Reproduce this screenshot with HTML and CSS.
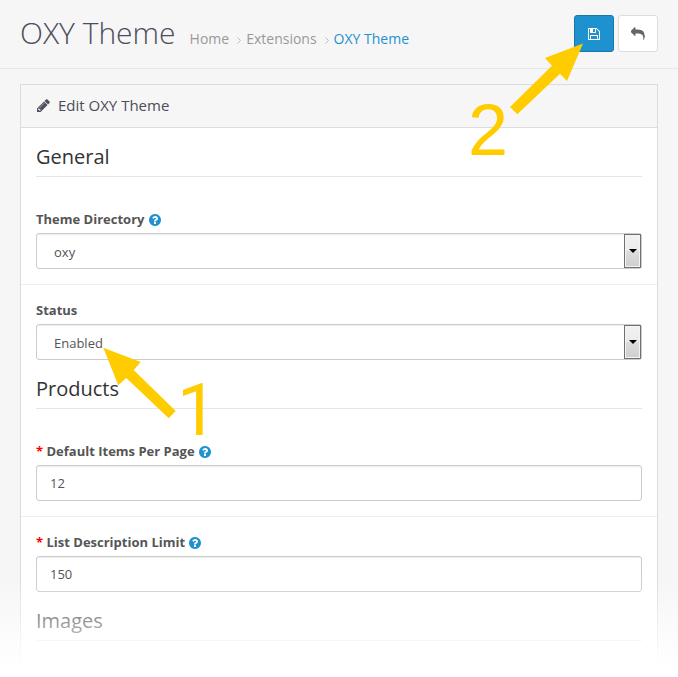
FILE: index.html
```html
<!DOCTYPE html>
<html lang="en">
<head>
<meta charset="utf-8">
<title>OXY Theme</title>
<meta name="viewport" content="width=device-width, initial-scale=1">
<link rel="stylesheet" href="styles.css">
</head>
<body>
<svg class="sprite" aria-hidden="true">
  <symbol id="i-help" viewBox="128 128 1536 1536"><path d="M1024 1376v-192q0-14-9-23t-23-9h-192q-14 0-23 9t-9 23v192q0 14 9 23t23 9h192q14 0 23-9t9-23zm256-672q0-88-55.500-163t-138.500-116-170-41q-243 0-371 213-15 24 8 42l132 100q7 6 19 6 16 0 25-12 53-68 86-92 34-24 86-24 48 0 85.500 26t37.500 59q0 38-20 61t-68 45q-63 28-115.500 86.500t-52.500 125.500v36q0 14 9 23t23 9h192q14 0 23-9t9-23q0-19 21.500-49.500t54.500-49.500q32-18 49-28.500t46-35 44.500-48 28-60.500 12.500-81zm384 192q0 209-103 385.500t-279.500 279.500-385.500 103-385.500-103-279.500-279.500-103-385.500 103-385.500 279.500-279.500 385.500-103 385.500 103 279.500 279.500 103 385.500z"/></symbol>
</svg>
<div class="page">
  <header class="page-header">
    <div class="heading">
      <h1>OXY Theme</h1>
      <nav aria-label="Breadcrumb">
        <ul class="breadcrumb">
          <li><a href="#">Home</a><svg class="sep" viewBox="0 0 4 7" aria-hidden="true"><path d="M.5.5l3 3-3 3"/></svg></li>
          <li><a href="#">Extensions</a><svg class="sep" viewBox="0 0 4 7" aria-hidden="true"><path d="M.5.5l3 3-3 3"/></svg></li>
          <li><a class="current" href="#">OXY Theme</a></li>
        </ul>
      </nav>
    </div>
    <div class="actions">
      <button class="btn btn-primary" type="submit" form="theme-form" aria-label="Save">
        <svg class="icon" viewBox="0 0 1792 1792"><path d="M512 1536h768v-384h-768v384zm896 0h128v-896q0-14-10-38.500t-20-34.500l-281-281q-10-10-34-20t-39-10v416q0 40-28 68t-68 28h-576q-40 0-68-28t-28-68v-416h-128v1280h128v-416q0-40 28-68t68-28h832q40 0 68 28t28 68v416zm-384-928v-320q0-13-9.500-22.500t-22.500-9.500h-192q-13 0-22.500 9.500t-9.500 22.500v320q0 13 9.500 22.500t22.500 9.500h192q13 0 22.500-9.500t9.500-22.500zm640 32v928q0 40-28 68t-68 28h-1344q-40 0-68-28t-28-68v-1344q0-40 28-68t68-28h928q40 0 88 20t76 48l280 280q28 28 48 76t20 88z"/></svg>
      </button>
      <a class="btn btn-default" href="#" aria-label="Back">
        <svg class="icon" viewBox="0 0 1792 1792"><path d="M1792 1120q0 166-127 451-3 7-10.500 24t-13.500 30-13 22q-12 17-28 17-15 0-23.500-10t-8.500-25q0-9 2.500-26.500t2.500-23.500q5-68 5-123 0-112-19.500-200.500t-54-153.500-89-112-117.500-76.500-146.500-48-169-24.500-191-7h-224v256q0 26-19 45t-45 19-45-19l-512-512q-19-19-19-45t19-45l512-512q19-19 45-19t45 19 19 45v256h224q713 0 875 403 53 134 53 333z"/></svg>
      </a>
      <svg class="callout callout-save" viewBox="460 40 130 140">
        <polygon points="583,43.500 545,58 552,65.700 510,107 517.300,114.300 560,73.700 567,81"/>
        <text x="468" y="155">2</text>
      </svg>
    </div>
  </header>

  <main class="panel">
    <h2 class="panel-title">
      <svg class="icon" viewBox="0 0 1792 1792" aria-hidden="true"><path d="M491 1536l91-91-235-235-91 91v107h128v128h107zm523-928q0-22-22-22-10 0-17 7l-542 542q-7 7-7 17 0 22 22 22 10 0 17-7l542-542q7-7 7-17zm-54-192l416 416-832 832h-416v-416zm683 96q0 53-37 90l-166 166-416-416 166-165q36-38 90-38 53 0 91 38l235 234q37 39 37 91z"/></svg>
      Edit OXY Theme
    </h2>
    <form id="theme-form" class="panel-body">
      <section>
        <h3>General</h3>
        <div class="group">
          <label for="directory">Theme Directory <svg class="help"><use href="#i-help"/></svg></label>
          <div class="select"><select id="directory"><option>oxy</option></select></div>
        </div>
        <div class="group">
          <label for="status">Status</label>
          <div class="select"><select id="status"><option>Enabled</option><option>Disabled</option></select></div>
          <svg class="callout callout-status" viewBox="100 340 120 120">
            <polygon points="103.300,347.700 140.700,362 133.700,370 175.700,411 168.700,418.300 126.300,378 118.300,385.300"/>
            <text class="roman" x="177" y="435">1</text>
          </svg>
        </div>
      </section>
      <section>
        <h3>Products</h3>
        <div class="group">
          <label for="limit"><span class="required">*</span> Default Items Per Page <svg class="help"><use href="#i-help"/></svg></label>
          <input id="limit" type="text" value="12">
        </div>
        <div class="group">
          <label for="description"><span class="required">*</span> List Description Limit <svg class="help"><use href="#i-help"/></svg></label>
          <input id="description" type="text" value="150">
        </div>
      </section>
      <section>
        <h3>Images</h3>
      </section>
    </form>
  </main>
  <div class="fade"></div>
</div>
</body>
</html>
```
FILE: styles.css
```css
* {
  box-sizing: border-box;
}

body {
  margin: 0;
  background: #f6f6f6;
  color: #555;
  font: 13px/20px "Open Sans", "Noto Sans", sans-serif;
}

h1, h2, h3, ul {
  margin: 0;
  padding: 0;
  font-weight: 400;
}

a {
  color: #999;
  text-decoration: none;
}

.sprite {
  display: none;
}

.page {
  position: relative;
  display: flex;
  flex-direction: column;
  min-height: 100vh;
}

.page-header {
  display: flex;
  justify-content: space-between;
  align-items: flex-start;
  padding: 15px 20px 16px;
  border-bottom: 1px solid #e7e7e7;
}

.heading {
  display: flex;
  align-items: baseline;
  gap: 14px;
}

h1 {
  color: #4c4d5a;
  font-size: 30px;
  font-weight: 300;
  line-height: 35px;
}

.breadcrumb {
  display: flex;
  list-style: none;
  font-size: 14px;
}

.breadcrumb .current {
  color: #1e91cf;
}

.sep {
  width: 4px;
  height: 7px;
  margin: 0 5px 0 8px;
  fill: none;
  stroke: #bbb;
}

.actions {
  position: relative;
  display: flex;
  gap: 4px;
}

.btn {
  display: flex;
  align-items: center;
  justify-content: center;
  padding: 0 12px;
  height: 37px;
  border: 1px solid #ddd;
  border-radius: 3px;
  background: #fff;
  color: #666;
  cursor: pointer;
}

.btn-primary {
  border-color: #1978ab;
  background: #1e91cf;
  color: #fff;
}

.icon {
  width: 14px;
  height: 14px;
  fill: currentColor;
}

.panel {
  flex: 1;
  margin: 15px 20px 0;
  border: 1px solid #dcdcdc;
  border-bottom: 0;
  background: #fff;
}

.panel-title {
  display: flex;
  align-items: center;
  gap: 7px;
  padding: 10px 15px 12px;
  border-bottom: 1px solid #dcdcdc;
  background: #f6f6f6;
  color: #4c4d5a;
  font-size: 15px;
  line-height: 20px;
}

.panel-title .icon {
  width: 15px;
  height: 15px;
}

.panel-body {
  padding: 15px;
}

h3 {
  padding-bottom: 5px;
  border-bottom: 1px solid #e5e5e5;
  color: #333;
  font-size: 20px;
  line-height: 28px;
}

.group {
  position: relative;
  margin: 0 -15px;
  padding: 15px;
}

h3 + .group {
  margin-top: 17px;
}

.group + .group {
  border-top: 1px solid #ededed;
}

label {
  display: block;
  margin-bottom: 4px;
  font-weight: 700;
}

.required {
  color: #f00;
}

.help {
  width: 12px;
  height: 12px;
  margin-left: 1px;
  fill: #1e91cf;
  vertical-align: -2px;
}

input,
select {
  display: block;
  width: 100%;
  height: 36px;
  padding: 0 13px;
  border: 1px solid #ccc;
  border-radius: 3px;
  background: #fff;
  box-shadow: inset 0 1px 1px rgba(0, 0, 0, .075);
  color: #555;
  font: inherit;
}

select {
  appearance: none;
  padding: 2px 30px 0 17px;
}

.select {
  position: relative;
}

.select::before,
.select::after {
  content: "";
  position: absolute;
  pointer-events: none;
}

.select::before {
  top: 1px;
  right: 1px;
  bottom: 1px;
  width: 15px;
  border: 1px solid #707070;
  background: linear-gradient(#f2f2f2, #ebebeb 50%, #ddd 50%, #cfcfcf);
  box-shadow: inset 0 0 0 1px #f4f4f4;
}

.select::after {
  top: 16px;
  right: 5px;
  border: 4px solid transparent;
  border-top-color: #000;
  border-bottom: 0;
}

.callout {
  position: absolute;
  z-index: 2;
  fill: #fc0;
  font: 72px "Liberation Sans", sans-serif;
  pointer-events: none;
}

.callout .roman {
  font-family: Roboto, sans-serif;
}

.callout-save {
  top: 25px;
  right: 68px;
  width: 130px;
  height: 140px;
}

.callout-status {
  top: 55px;
  left: 79px;
  width: 120px;
  height: 120px;
}

.fade {
  position: absolute;
  right: 0;
  bottom: 0;
  left: 0;
  height: 100px;
  background: linear-gradient(rgba(255, 255, 255, 0), #fff 90%);
  pointer-events: none;
}
```
